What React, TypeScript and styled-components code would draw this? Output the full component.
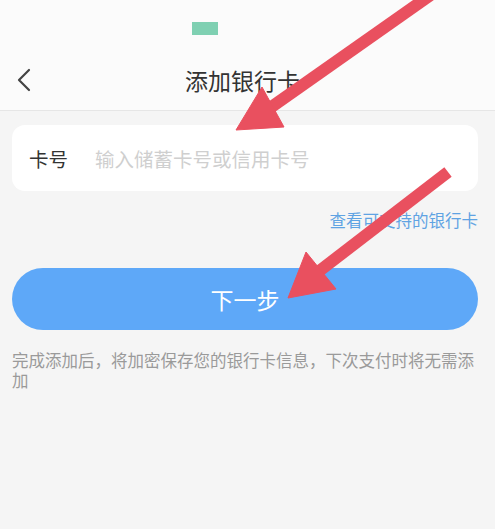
import React from "react";
import styled, { createGlobalStyle } from "styled-components";

const GlobalStyle = createGlobalStyle`
  html, body {
    margin: 0;
    padding: 0;
    background: #f5f5f5;
  }
  body {
    font-family: "Noto Sans CJK SC", "Noto Sans", sans-serif;
  }
`;

const Page = styled.div`
  position: relative;
  width: 495px;
  min-height: 529px;
  overflow: hidden;
  background: #f5f5f5;
`;

const Header = styled.header`
  display: flex;
  flex-direction: column;
  background: #fbfbfb;
  border-bottom: 1px solid #e6e6e6;
`;

const StatusBar = styled.div`
  height: 50px;
  padding: 22px 0 0 192px;
  box-sizing: border-box;
`;

const StatusMark = styled.div`
  width: 26px;
  height: 13px;
  background: #7fd0b2;
`;

const NavBar = styled.div`
  display: grid;
  grid-template-columns: 1fr auto 1fr;
  align-items: center;
  height: 60px;
  padding-right: 10px;
`;

const BackButton = styled.button`
  display: flex;
  align-items: center;
  justify-self: start;
  padding: 0 0 0 16px;
  border: 0;
  background: none;
  color: #444;
  cursor: pointer;
`;

const Title = styled.h1`
  margin: 0;
  font-size: 23px;
  font-weight: 400;
  color: #333;
  line-height: 1;
`;

const Content = styled.main`
  display: flex;
  flex-direction: column;
  padding: 14px 17px 0 12px;
`;

const Card = styled.div`
  display: flex;
  align-items: center;
  height: 66px;
  padding: 0 17px;
  background: #fff;
  border-radius: 13px;
`;

const Label = styled.span`
  width: 66px;
  flex-shrink: 0;
  font-size: 19.5px;
  color: #333;
`;

const Input = styled.input`
  flex: 1;
  min-width: 0;
  border: 0;
  outline: none;
  background: transparent;
  font-family: inherit;
  font-size: 19.5px;
  color: #333;
  padding: 0;

  &::placeholder {
    color: #cfcfcf;
  }
`;

const Link = styled.a`
  align-self: flex-end;
  margin-top: 17px;
  font-size: 16.5px;
  line-height: 24px;
  color: #5fa3e3;
  text-decoration: none;
`;

const NextButton = styled.button`
  margin-top: 36px;
  height: 62px;
  border: 0;
  border-radius: 31px;
  background: #5ea8f8;
  color: #fff;
  font-family: inherit;
  font-size: 23px;
  cursor: pointer;
`;

const Note = styled.p`
  margin: 20px 0 0 0;
  font-size: 16.5px;
  line-height: 20px;
  color: #9a9a9a;
`;

const Overlay = styled.svg`
  position: absolute;
  inset: 0;
  pointer-events: none;
`;

const ARROW = "#e9505f";

const Arrow: React.FC<{
  from: [number, number];
  base: [number, number];
  tip: [number, number];
  wings: [[number, number], [number, number]];
}> = ({ from, base, tip, wings }) => (
  <g fill={ARROW} stroke={ARROW}>
    <line
      x1={from[0]}
      y1={from[1]}
      x2={base[0]}
      y2={base[1]}
      strokeWidth={12}
      strokeLinecap="butt"
    />
    <polygon
      points={`${tip[0]},${tip[1]} ${wings[0][0]},${wings[0][1]} ${wings[1][0]},${wings[1][1]}`}
      strokeWidth={1}
      strokeLinejoin="round"
    />
  </g>
);

export default function App() {
  return (
    <Page>
      <GlobalStyle />
      <Header>
        <StatusBar>
          <StatusMark />
        </StatusBar>
        <NavBar>
          <BackButton aria-label="返回">
            <svg width="16" height="24" viewBox="0 0 16 24">
              <path
                d="M13 2 L3 12 L13 22"
                fill="none"
                stroke="currentColor"
                strokeWidth="2.2"
                strokeLinecap="round"
                strokeLinejoin="round"
              />
            </svg>
          </BackButton>
          <Title>添加银行卡</Title>
          <span />
        </NavBar>
      </Header>
      <Content>
        <Card>
          <Label>卡号</Label>
          <Input placeholder="输入储蓄卡号或信用卡号" />
        </Card>
        <Link href="#">查看可支持的银行卡</Link>
        <NextButton>下一步</NextButton>
        <Note>完成添加后，将加密保存您的银行卡信息，下次支付时将无需添加</Note>
      </Content>
      <Overlay width="495" height="529" viewBox="0 0 495 529">
        <Arrow
          from={[432, -6]}
          base={[270, 108]}
          tip={[236, 130]}
          wings={[
            [262, 87],
            [284, 127],
          ]}
        />
        <Arrow
          from={[448, 172]}
          base={[318, 272]}
          tip={[288, 298]}
          wings={[
            [306, 252],
            [336, 289],
          ]}
        />
      </Overlay>
    </Page>
  );
}
